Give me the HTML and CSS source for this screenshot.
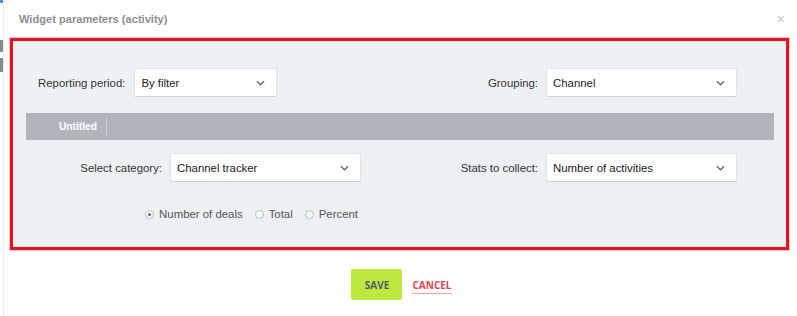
FILE: index.html
```html
<!DOCTYPE html>
<html lang="en">
<head>
    <meta charset="UTF-8">
    <meta name="viewport" content="width=device-width, initial-scale=1.0">
    <title>Widget parameters</title>
    <link rel="stylesheet" href="styles.css">
</head>
<body>
    <div class="page">
        <div class="backdrop">
            <span class="mark-blue"></span>
            <span class="mark-gray first"></span>
            <span class="mark-gray"></span>
        </div>

        <div class="modal">
            <div class="modal-header">
                <span class="modal-title">Widget parameters (activity)</span>
                <span class="modal-close">&times;</span>
            </div>

            <div class="modal-body">
                <div class="form-row row-top">
                    <div class="field field-start">
                        <label>Reporting period:</label>
                        <div class="select select-narrow">
                            <span>By filter</span>
                            <svg class="chevron" viewBox="0 0 10 6"><path d="M1 1l4 4 4-4"/></svg>
                        </div>
                    </div>
                    <div class="field field-end">
                        <label>Grouping:</label>
                        <div class="select">
                            <span>Channel</span>
                            <svg class="chevron" viewBox="0 0 10 6"><path d="M1 1l4 4 4-4"/></svg>
                        </div>
                    </div>
                </div>

                <div class="tab-bar">
                    <div class="tab">Untitled</div>
                </div>

                <div class="form-row row-second">
                    <div class="field field-end left-end">
                        <label>Select category:</label>
                        <div class="select">
                            <span>Channel tracker</span>
                            <svg class="chevron" viewBox="0 0 10 6"><path d="M1 1l4 4 4-4"/></svg>
                        </div>
                    </div>
                    <div class="field field-end">
                        <label>Stats to collect:</label>
                        <div class="select">
                            <span>Number of activities</span>
                            <svg class="chevron" viewBox="0 0 10 6"><path d="M1 1l4 4 4-4"/></svg>
                        </div>
                    </div>
                </div>

                <div class="form-row row-radios">
                    <div class="radios">
                        <span class="radio checked"></span><span class="radio-label">Number of deals</span>
                        <span class="radio"></span><span class="radio-label">Total</span>
                        <span class="radio"></span><span class="radio-label">Percent</span>
                    </div>
                    <div></div>
                </div>
            </div>

            <div class="modal-footer">
                <button class="btn-save">SAVE</button>
                <a class="btn-cancel">CANCEL</a>
            </div>
        </div>
    </div>
</body>
</html>
```

FILE: styles.css
```css
body {
    margin: 0;
    background: #fff;
    font-family: "Liberation Sans", Arial, sans-serif;
}
.page {
    display: flex;
    height: 316px;
    overflow: hidden;
}

/* page behind the dialog */
.backdrop {
    width: 3px;
    display: flex;
    flex-direction: column;
}
.mark-blue { display: block; height: 3px; background: #4a90e2; }
.mark-gray { display: block; height: 14px; margin-top: 6px; background: #888; }
.mark-gray.first { margin-top: 37px; height: 12px; }

.modal {
    flex: 1;
    border-left: 1px solid #ececec;
    background: #fff;
}
.modal-header {
    height: 38px;
    display: flex;
    align-items: center;
    justify-content: space-between;
    padding: 0 12px 0 15px;
}
.modal-title {
    font-size: 11.1px;
    font-weight: bold;
    color: #8e8e8e;
}
.modal-close {
    font-size: 14px;
    color: #c4c4c4;
}

/* highlighted body */
.modal-body {
    margin: 0 8px 0 6px;
    border: 3px solid #e3121c;
    box-shadow: 0 0 0 1px rgba(227, 18, 28, 0.25);
    background: #edf0f3;
    padding: 0 12px 25px 13px;
}
.form-row {
    display: grid;
    grid-template-columns: 1fr 1fr;
}
.row-top { padding-top: 27px; }
.row-second { margin-top: 13px; }
.row-radios { margin-top: 24px; }

.field {
    display: flex;
    align-items: center;
    gap: 8px;
    font-size: 11.4px;
    color: #333;
}
.field label { white-space: nowrap; }
.field-start { padding-left: 12px; gap: 9px; }
.field-end { justify-content: flex-end; padding-right: 37px; }
.left-end { padding-right: 39px; }

.select {
    width: 191px;
    height: 29px;
    box-sizing: border-box;
    background: #fff;
    border: 1px solid #dfe2e6;
    border-bottom-color: #cdd1d6;
    border-radius: 2px;
    display: flex;
    align-items: center;
    justify-content: space-between;
    padding: 0 11px 0 6px;
    color: #222;
}
.select-narrow { width: 143px; }
.chevron {
    width: 9px;
    height: 6px;
    fill: none;
    stroke: #666;
    stroke-width: 1.4;
}

.tab-bar {
    margin-top: 16px;
    height: 27px;
    background: #b1b5bb;
    display: flex;
    align-items: center;
}
.tab {
    margin-left: 24px;
    padding: 0 9px;
    height: 18px;
    line-height: 18px;
    border-right: 1px solid #cfd2d6;
    color: #fff;
    font-weight: bold;
    font-size: 10.2px;
}

.radios {
    display: flex;
    justify-content: flex-end;
    align-items: center;
    font-size: 11.4px;
    color: #555;
    height: 16px;
    padding-right: 42px;
}
.radio {
    width: 7px;
    height: 7px;
    border-radius: 50%;
    border: 1px solid #b8bcc2;
    background: #f7f8f9;
    margin-right: 5px;
    position: relative;
}
.radio.checked::after {
    content: "";
    position: absolute;
    left: 2px;
    top: 2px;
    width: 3px;
    height: 3px;
    border-radius: 50%;
    background: #666;
}
.radio-label { margin-right: 12px; }
.radio-label:last-child { margin-right: 0; }

.modal-footer {
    display: flex;
    justify-content: center;
    align-items: center;
    gap: 10px;
    margin-top: 19px;
    padding-left: 2px;
}
.btn-save {
    width: 51px;
    height: 31px;
    border: none;
    border-radius: 2px;
    background: #bde93f;
    color: #555b62;
    font-family: "Open Sans", sans-serif;
    font-weight: bold;
    font-size: 10px;
    padding: 0;
}
.btn-cancel {
    font-family: "Open Sans", sans-serif;
    font-weight: bold;
    font-size: 10px;
    color: #e2424c;
    border-bottom: 1px solid #f2a4a8;
    padding-bottom: 1px;
    margin-top: 2px;
}
```
